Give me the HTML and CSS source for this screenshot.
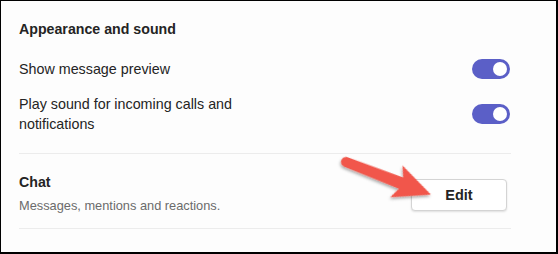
FILE: index.html
```html
<!DOCTYPE html>
<html>
<head>
<meta charset="utf-8">
<link rel="stylesheet" href="styles.css">
</head>
<body>
<div class="frame">
  <div class="section">
    <div class="heading">Appearance and sound</div>
    <div class="row row-first">
      <div class="label">Show message preview</div>
      <div class="toggle"><span class="knob"></span></div>
    </div>
    <div class="row row-second">
      <div class="label">Play sound for incoming calls and<br>notifications</div>
      <div class="toggle"><span class="knob"></span></div>
    </div>
  </div>
  <div class="section chat">
    <div class="row">
      <div class="chat-text">
        <div class="heading">Chat</div>
        <div class="sub">Messages, mentions and reactions.</div>
      </div>
      <button class="edit">Edit</button>
    </div>
  </div>
  <svg class="arrow" width="558" height="254" viewBox="0 0 558 254">
    <defs>
      <filter id="sh" x="-20%" y="-20%" width="140%" height="160%">
        <feDropShadow dx="0" dy="2" stdDeviation="1.5" flood-color="#000" flood-opacity="0.35"/>
      </filter>
    </defs>
    <g transform="translate(346 162) rotate(21)" filter="url(#sh)">
      <path d="M0,-5 L59,-6 L54,-17 L91,0 L54,17 L59,6 L0,5 A5,5 0 0 1 0,-5 Z" fill="#f1574b"/>
    </g>
  </svg>
</div>
</body>
</html>
```
FILE: styles.css
```css
html, body {
  margin: 0;
  padding: 0;
  background: #fff;
}
.frame {
  position: relative;
  box-sizing: border-box;
  width: 558px;
  height: 254px;
  border-top: 1px solid #000;
  border-left: 1px solid #000;
  border-right: 2px solid #000;
  border-bottom: 2px solid #000;
  background: #fdfdfd;
  padding: 18px 45px 0 18px;
  font-family: "Liberation Sans", Arial, sans-serif;
  color: #242424;
}
.section {
  border-bottom: 1px solid #ececec;
  padding-bottom: 19px;
}
.heading {
  font-weight: bold;
  font-size: 14.2px;
  line-height: 20px;
}
.row {
  display: flex;
  justify-content: space-between;
  align-items: center;
}
.row-first {
  margin-top: 20px;
}
.row-second {
  margin-top: 15px;
}
.label {
  font-size: 14.3px;
  line-height: 20px;
}
.toggle {
  width: 38px;
  height: 20px;
  border-radius: 10px;
  background: #5b5fc7;
  display: flex;
  align-items: center;
  justify-content: flex-end;
  padding: 0 3px;
  box-sizing: border-box;
  margin-right: 1px;
}
.knob {
  width: 14px;
  height: 14px;
  border-radius: 50%;
  background: #fff;
}
.chat {
  padding-top: 18px;
  padding-bottom: 13px;
}
.sub {
  margin-top: 5px;
  font-size: 12.8px;
  line-height: 18px;
  color: #6b6b6b;
}
.edit {
  width: 96px;
  height: 32px;
  margin-right: 4px;
  background: #fff;
  border: 1px solid #d4d4d4;
  border-radius: 4px;
  box-shadow: 0 1px 2px rgba(0,0,0,0.12);
  font-family: "Liberation Sans", Arial, sans-serif;
  font-weight: bold;
  font-size: 14.5px;
  color: #242424;
  margin-top: 2px;
}
.arrow {
  position: absolute;
  left: -1px;
  top: -1px;
  pointer-events: none;
}
```
